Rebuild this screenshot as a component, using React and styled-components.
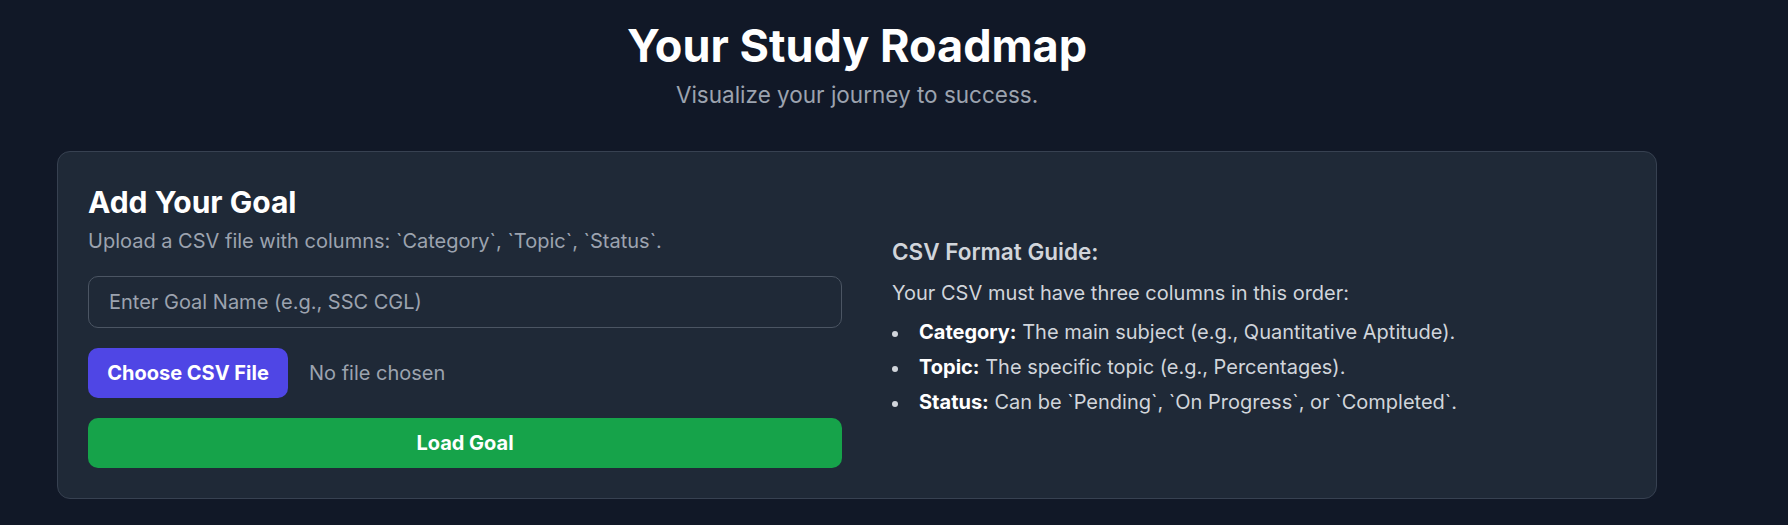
import React from 'react';
import styled, { createGlobalStyle } from 'styled-components';

const GlobalStyle = createGlobalStyle`
  html, body {
    margin: 0;
    padding: 0;
    background: #111827;
    font-family: "Inter", "Noto Sans", sans-serif;
    -webkit-font-smoothing: antialiased;
  }
`;

const Page = styled.main`
  min-height: 525px;
  padding: 21px 0 0 57px;
  box-sizing: border-box;
`;

const Container = styled.div`
  width: 1600px;
`;

const Header = styled.header`
  text-align: center;
  margin-bottom: 39px;
`;

const Title = styled.h1`
  margin: 0;
  font-size: 45px;
  line-height: 50px;
  font-weight: 700;
  color: #ffffff;
`;

const Tagline = styled.p`
  margin: 6px 0 0;
  font-size: 22.5px;
  line-height: 35px;
  color: #9ca3af;
`;

const Card = styled.section`
  box-sizing: border-box;
  background: #1f2937;
  border: 1px solid #374151;
  border-radius: 13px;
  padding: 30px;
  display: grid;
  grid-template-columns: 1fr 1fr;
  column-gap: 30px;
  align-items: center;
`;

const FormColumn = styled.div`
  display: flex;
  flex-direction: column;
`;

const CardTitle = styled.h2`
  margin: 0;
  font-size: 30px;
  line-height: 40px;
  font-weight: 700;
  color: #ffffff;
`;

const CardHint = styled.p`
  margin: 4px 0 20px;
  font-size: 20px;
  line-height: 30px;
  color: #9ca3af;
`;

const GoalInput = styled.input`
  box-sizing: border-box;
  width: 100%;
  height: 52px;
  padding: 0 20px;
  background: #1f2937;
  border: 1px solid #4b5563;
  border-radius: 10px;
  font-family: inherit;
  font-size: 20px;
  color: #f3f4f6;
  outline: none;

  &::placeholder {
    color: #9ca3af;
  }
`;

const FileRow = styled.div`
  display: flex;
  align-items: center;
  gap: 21px;
  margin: 20px 0;
`;

const FileButton = styled.label`
  box-sizing: border-box;
  display: inline-flex;
  align-items: center;
  justify-content: center;
  width: 200px;
  height: 50px;
  background: #4f46e5;
  border-radius: 10px;
  color: #ffffff;
  font-size: 20px;
  font-weight: 700;
  cursor: pointer;
`;

const FileName = styled.span`
  font-size: 20px;
  color: #9ca3af;
`;

const LoadButton = styled.button`
  width: 100%;
  height: 50px;
  border: none;
  border-radius: 10px;
  background: #16a34a;
  color: #ffffff;
  font-family: inherit;
  font-size: 20px;
  font-weight: 700;
  cursor: pointer;
`;

const GuideColumn = styled.div`
  padding: 0 20px;
  color: #d1d5db;
`;

const GuideTitle = styled.h3`
  margin: 0;
  font-size: 22.5px;
  line-height: 35px;
  font-weight: 600;
  color: #d1d5db;
`;

const GuideText = styled.p`
  margin: 9px 0;
  font-size: 20px;
  line-height: 30px;
`;

const GuideList = styled.ul`
  margin: 0;
  padding: 0;
  list-style: none;
  display: flex;
  flex-direction: column;
  gap: 5px;
`;

const GuideItem = styled.li`
  display: flex;
  align-items: flex-start;
  font-size: 20px;
  line-height: 30px;
`;

const Dot = styled.span`
  flex: none;
  width: 6px;
  height: 6px;
  border-radius: 50%;
  background: #d1d5db;
  margin: 14px 21px 0 0;
`;

const Field = styled.strong`
  font-weight: 700;
  color: #ffffff;
`;

const guide = [
  { field: 'Category:', text: 'The main subject (e.g., Quantitative Aptitude).' },
  { field: 'Topic:', text: 'The specific topic (e.g., Percentages).' },
  { field: 'Status:', text: 'Can be `Pending`, `On Progress`, or `Completed`.' }
];

export default function App() {
  return (
    <>
      <GlobalStyle />
      <Page>
        <Container>
          <Header>
            <Title>Your Study Roadmap</Title>
            <Tagline>Visualize your journey to success.</Tagline>
          </Header>
          <Card>
            <FormColumn>
              <CardTitle>Add Your Goal</CardTitle>
              <CardHint>Upload a CSV file with columns: `Category`, `Topic`, `Status`.</CardHint>
              <GoalInput type="text" placeholder="Enter Goal Name (e.g., SSC CGL)" />
              <FileRow>
                <FileButton>Choose CSV File</FileButton>
                <FileName>No file chosen</FileName>
              </FileRow>
              <LoadButton type="button">Load Goal</LoadButton>
            </FormColumn>
            <GuideColumn>
              <GuideTitle>CSV Format Guide:</GuideTitle>
              <GuideText>Your CSV must have three columns in this order:</GuideText>
              <GuideList>
                {guide.map((g) => (
                  <GuideItem key={g.field}>
                    <Dot />
                    <span>
                      <Field>{g.field}</Field> {g.text}
                    </span>
                  </GuideItem>
                ))}
              </GuideList>
            </GuideColumn>
          </Card>
        </Container>
      </Page>
    </>
  );
}
